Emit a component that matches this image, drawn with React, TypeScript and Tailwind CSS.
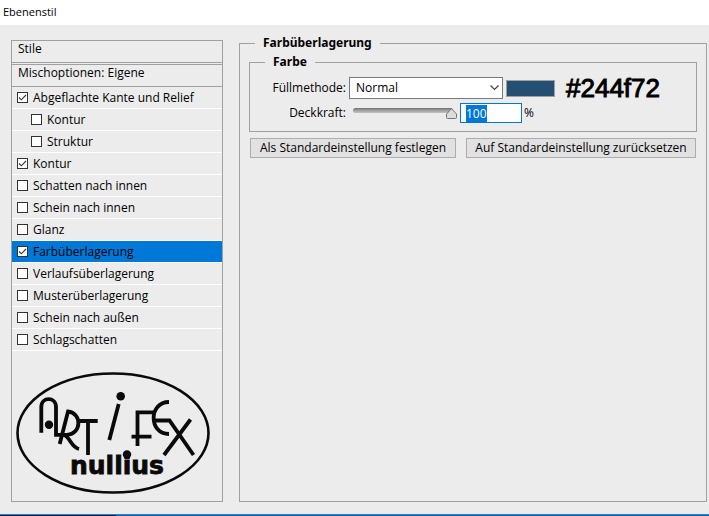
import { useEffect, useRef, useState } from "react";
import clsx from "clsx";

const STYLES = [
  { id: "bevel", label: "Abgeflachte Kante und Relief", checked: true },
  { id: "bevel-contour", label: "Kontur", checked: false, nested: true },
  { id: "bevel-texture", label: "Struktur", checked: false, nested: true },
  { id: "stroke", label: "Kontur", checked: true },
  { id: "inner-shadow", label: "Schatten nach innen", checked: false },
  { id: "inner-glow", label: "Schein nach innen", checked: false },
  { id: "satin", label: "Glanz", checked: false },
  { id: "color-overlay", label: "Farbüberlagerung", checked: true },
  { id: "gradient-overlay", label: "Verlaufsüberlagerung", checked: false },
  { id: "pattern-overlay", label: "Musterüberlagerung", checked: false },
  { id: "outer-glow", label: "Schein nach außen", checked: false },
  { id: "drop-shadow", label: "Schlagschatten", checked: false },
];

function StyleRow({ item, selected }: { item: (typeof STYLES)[number]; selected: boolean }) {
  const [checked, setChecked] = useState(item.checked);

  return (
    <li
      className={clsx(
        "flex h-[22px] items-center border-b border-white",
        item.nested ? "pl-[19px]" : "pl-[5px]",
        selected && "bg-[#0078d7]"
      )}
    >
      <span className="grid">
        <input
          id={item.id}
          type="checkbox"
          checked={checked}
          onChange={(e) => setChecked(e.target.checked)}
          className="peer col-start-1 row-start-1 size-[11px] appearance-none border border-[#333333] bg-white"
        />
        <svg
          viewBox="0 0 11 11"
          className="pointer-events-none invisible col-start-1 row-start-1 size-[11px] peer-checked:visible"
          aria-hidden="true"
        >
          <path d="M2 5.5 4.3 7.8 9 3" fill="none" stroke="#333" strokeWidth="1.1" />
        </svg>
      </span>
      <label htmlFor={item.id} className="pl-[5px]">
        {item.label}
      </label>
    </li>
  );
}

function Logo() {
  return (
    <svg viewBox="12 365 210 136" className="block w-full" role="img" aria-label="Artifex nullius">
      <g fill="none" stroke="#0a0a0a" strokeWidth="3.8">
        <ellipse cx="113" cy="433" rx="95.5" ry="59.5" strokeWidth="2.6" />
        <path d="M41.3 432.7V407C41.3 396.5 56 396.5 56 407V434.8H67C82 434 82 413 68 411.5L59.7 444" />
        <path d="M64 435C70 437 71 447 79 449" />
        <path d="M77 421H97.7M88 421V455" />
        <path d="M118.7 404 109.3 440" />
        <path d="M137.5 446V412.3H154M131.5 436.7H151.5" />
        <path d="M169 402C148.5 402 148.5 434 169 434" />
        <path d="M154 420.5H169.5L193.5 455M190.5 419.5 164 455" />
      </g>
      <g fill="#0a0a0a">
        <circle cx="49" cy="424.7" r="4.2" />
        <circle cx="120.7" cy="396.3" r="4.3" />
        <circle cx="127" cy="454.5" r="4.2" />
        <text
          x="70"
          y="474"
          fontSize="25"
          fontWeight="700"
          fontFamily="DejaVu Sans, sans-serif"
          stroke="#0a0a0a"
          strokeWidth="0.8"
        >
          nullius
        </text>
      </g>
    </svg>
  );
}

function OpacitySlider({ value, onChange }: { value: number; onChange: (value: string) => void }) {
  return (
    <div className="relative ml-[7px] h-[20px] w-[104px]">
      <div className="mt-[5px] mr-1 h-[5px] rounded-full border-t border-[#777777] bg-linear-to-b from-[#8a8a8a] to-[#c4c4c4]" />
      <svg
        viewBox="0 0 11 11"
        className="pointer-events-none absolute top-[5px] size-[11px]"
        style={{ left: `calc((100% - 11px) * ${value / 100})` }}
        aria-hidden="true"
      >
        <path d="M5.5.7 10.5 6V9.5Q10.5 10.5 9.5 10.5H1.5Q.5 10.5.5 9.5V6Z" fill="#dcdcdc" stroke="#777" />
      </svg>
      <input
        type="range"
        aria-label="Deckkraft"
        min={0}
        max={100}
        value={value}
        onChange={(e) => onChange(e.target.value)}
        className="absolute inset-0 w-full opacity-0"
      />
    </div>
  );
}

export default function App() {
  const [opacity, setOpacity] = useState("100");
  const opacityRef = useRef<HTMLInputElement>(null);

  useEffect(() => {
    opacityRef.current?.focus();
    opacityRef.current?.select();
  }, []);

  return (
    <div className="flex min-h-screen flex-col bg-[#ececec] font-['Open_Sans',sans-serif] text-[12px] leading-4 text-black">
      <header className="h-[25px] bg-white px-[3px] pt-1">
        <h1 className="text-[11px]">Ebenenstil</h1>
      </header>

      <main className="flex flex-1 gap-4 pt-[10px] pr-[2px] pb-3 pl-[11px]">
        <nav className="mt-[5px] flex w-[212px] shrink-0 flex-col border border-[#a0a0a0]">
          <div className="h-[22px] border-b border-[#a0a0a0] px-[6px]">Stile</div>
          <div className="mt-px h-[23px] border-y border-[#a0a0a0] px-[6px]">Mischoptionen: Eigene</div>
          <ul>
            {STYLES.map((item) => (
              <StyleRow key={item.id} item={item} selected={item.id === "color-overlay"} />
            ))}
          </ul>
          <div className="mt-auto">
            <Logo />
          </div>
        </nav>

        <fieldset className="min-w-0 flex-1 border border-[#a0a0a0] px-[9px]">
          <legend className="ml-[6px] px-2 font-['Noto_Sans',sans-serif] font-bold">Farbüberlagerung</legend>
          <fieldset className="mt-[3px] border border-[#a0a0a0] pt-[3px] pb-2">
            <legend className="ml-[15px] px-2 font-['Noto_Sans',sans-serif] font-bold">Farbe</legend>
            <div className="flex h-[30px] items-center">
              <label htmlFor="blend" className="w-[96px] text-right">
                Füllmethode:
              </label>
              <div className="ml-[3px] grid w-[154px]">
                <select
                  id="blend"
                  className="col-start-1 row-start-1 h-[22px] appearance-none border border-[#7a7a7a] bg-white px-[6px]"
                >
                  <option>Normal</option>
                </select>
                <svg
                  viewBox="0 0 9 6"
                  className="pointer-events-none col-start-1 row-start-1 mr-1 w-[9px] self-center justify-self-end"
                  aria-hidden="true"
                >
                  <path d="M.5.5 4.5 4.5 8.5.5" fill="none" stroke="#444" strokeWidth="1.2" />
                </svg>
              </div>
              <button
                type="button"
                aria-label="Farbe wählen"
                className="ml-[3px] h-[17px] w-[49px] border border-[#a0a0a0] bg-[#244f72]"
              />
              <output className="ml-[11px] font-['Liberation_Sans',Arial,sans-serif] text-[26px] [-webkit-text-stroke:1px_black]">
                #244f72
              </output>
            </div>
            <div className="flex h-[20px] items-center">
              <label htmlFor="opacity" className="w-[96px] text-right">
                Deckkraft:
              </label>
              <OpacitySlider value={Number(opacity) || 0} onChange={setOpacity} />
              <input
                ref={opacityRef}
                id="opacity"
                value={opacity}
                onChange={(e) => setOpacity(e.target.value)}
                className="ml-[3px] h-[20px] w-[62px] border border-[#0078d7] bg-white px-[5px] outline-none selection:bg-[#0078d7] selection:text-white"
              />
              <span className="ml-[2px]">%</span>
            </div>
          </fieldset>
          <div className="mt-[6px] flex gap-[10px] px-px">
            <button type="button" className="h-[20px] w-[206px] border border-[#adadad] bg-[#e1e1e1]">
              Als Standardeinstellung festlegen
            </button>
            <button type="button" className="h-[20px] w-[230px] border border-[#adadad] bg-[#e1e1e1]">
              Auf Standardeinstellung zurücksetzen
            </button>
          </div>
        </fieldset>
      </main>
      <footer className="h-[2px] border-t border-[#1883d7] bg-[#2b5f8c]">
        <div className="h-px w-[116px] bg-[#0b1a2c]" />
      </footer>
    </div>
  );
}
